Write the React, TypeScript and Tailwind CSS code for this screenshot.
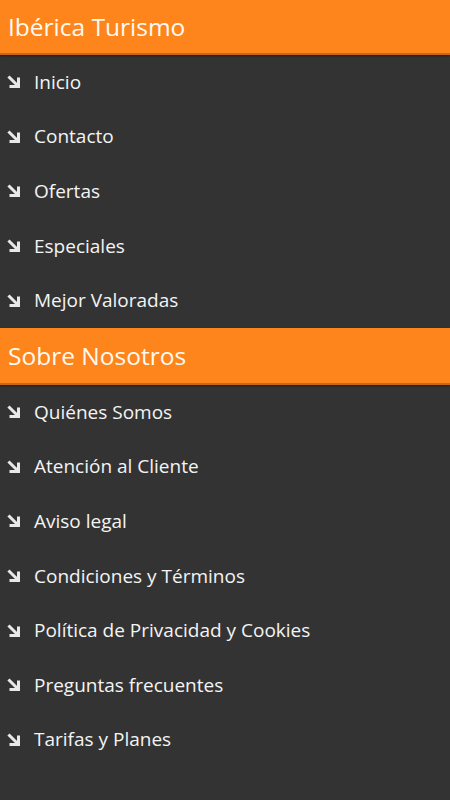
import React from "react";

const Arrow = () => (
  <svg width="14" height="14" viewBox="0 0 14 14" className="shrink-0">
    <path d="M2.5 2.5 L10 10" stroke="#e8e8e8" strokeWidth="3" strokeLinecap="square" fill="none" />
    <path d="M4 11.5 H11.5 V4" stroke="#e8e8e8" strokeWidth="3" strokeLinecap="square" strokeLinejoin="miter" fill="none" />
  </svg>
);

const Header = ({ title, tall }: { title: string; tall?: boolean }) => (
  <div
    className={
      tall
        ? "h-[57px] bg-[#fd851c] border-b-2 border-[#c96718] flex items-center pl-[8px] pt-[2px] shadow-[0_1px_2px_rgba(0,0,0,0.4)]"
        : "h-[55px] bg-[#fd851c] border-b-2 border-[#c96718] flex items-center pl-[8px] pt-[2px] shadow-[0_1px_2px_rgba(0,0,0,0.4)]"
    }
  >
    <span className="text-[24.5px] text-[#fffaf2] leading-none">{title}</span>
  </div>
);

const Item = ({ label }: { label: string }) => (
  <div className="h-[54.6px] flex items-center pl-[7px]">
    <Arrow />
    <span className="ml-[13px] text-[19px] text-[#f4f4f4] leading-none">{label}</span>
  </div>
);

export default function App() {
  const a = ["Inicio", "Contacto", "Ofertas", "Especiales", "Mejor Valoradas"];
  const b = [
    "Quiénes Somos",
    "Atención al Cliente",
    "Aviso legal",
    "Condiciones y Términos",
    "Política de Privacidad y Cookies",
    "Preguntas frecuentes",
    "Tarifas y Planes",
  ];
  return (
    <div className="w-[450px] h-[800px] bg-[#333333] overflow-hidden" style={{ fontFamily: '"Open Sans", "Noto Sans", sans-serif' }}>
      <Header title="Ibérica Turismo" />
      {a.map((l) => (
        <Item key={l} label={l} />
      ))}
      <Header title="Sobre Nosotros" tall />
      {b.map((l) => (
        <Item key={l} label={l} />
      ))}
    </div>
  );
}
